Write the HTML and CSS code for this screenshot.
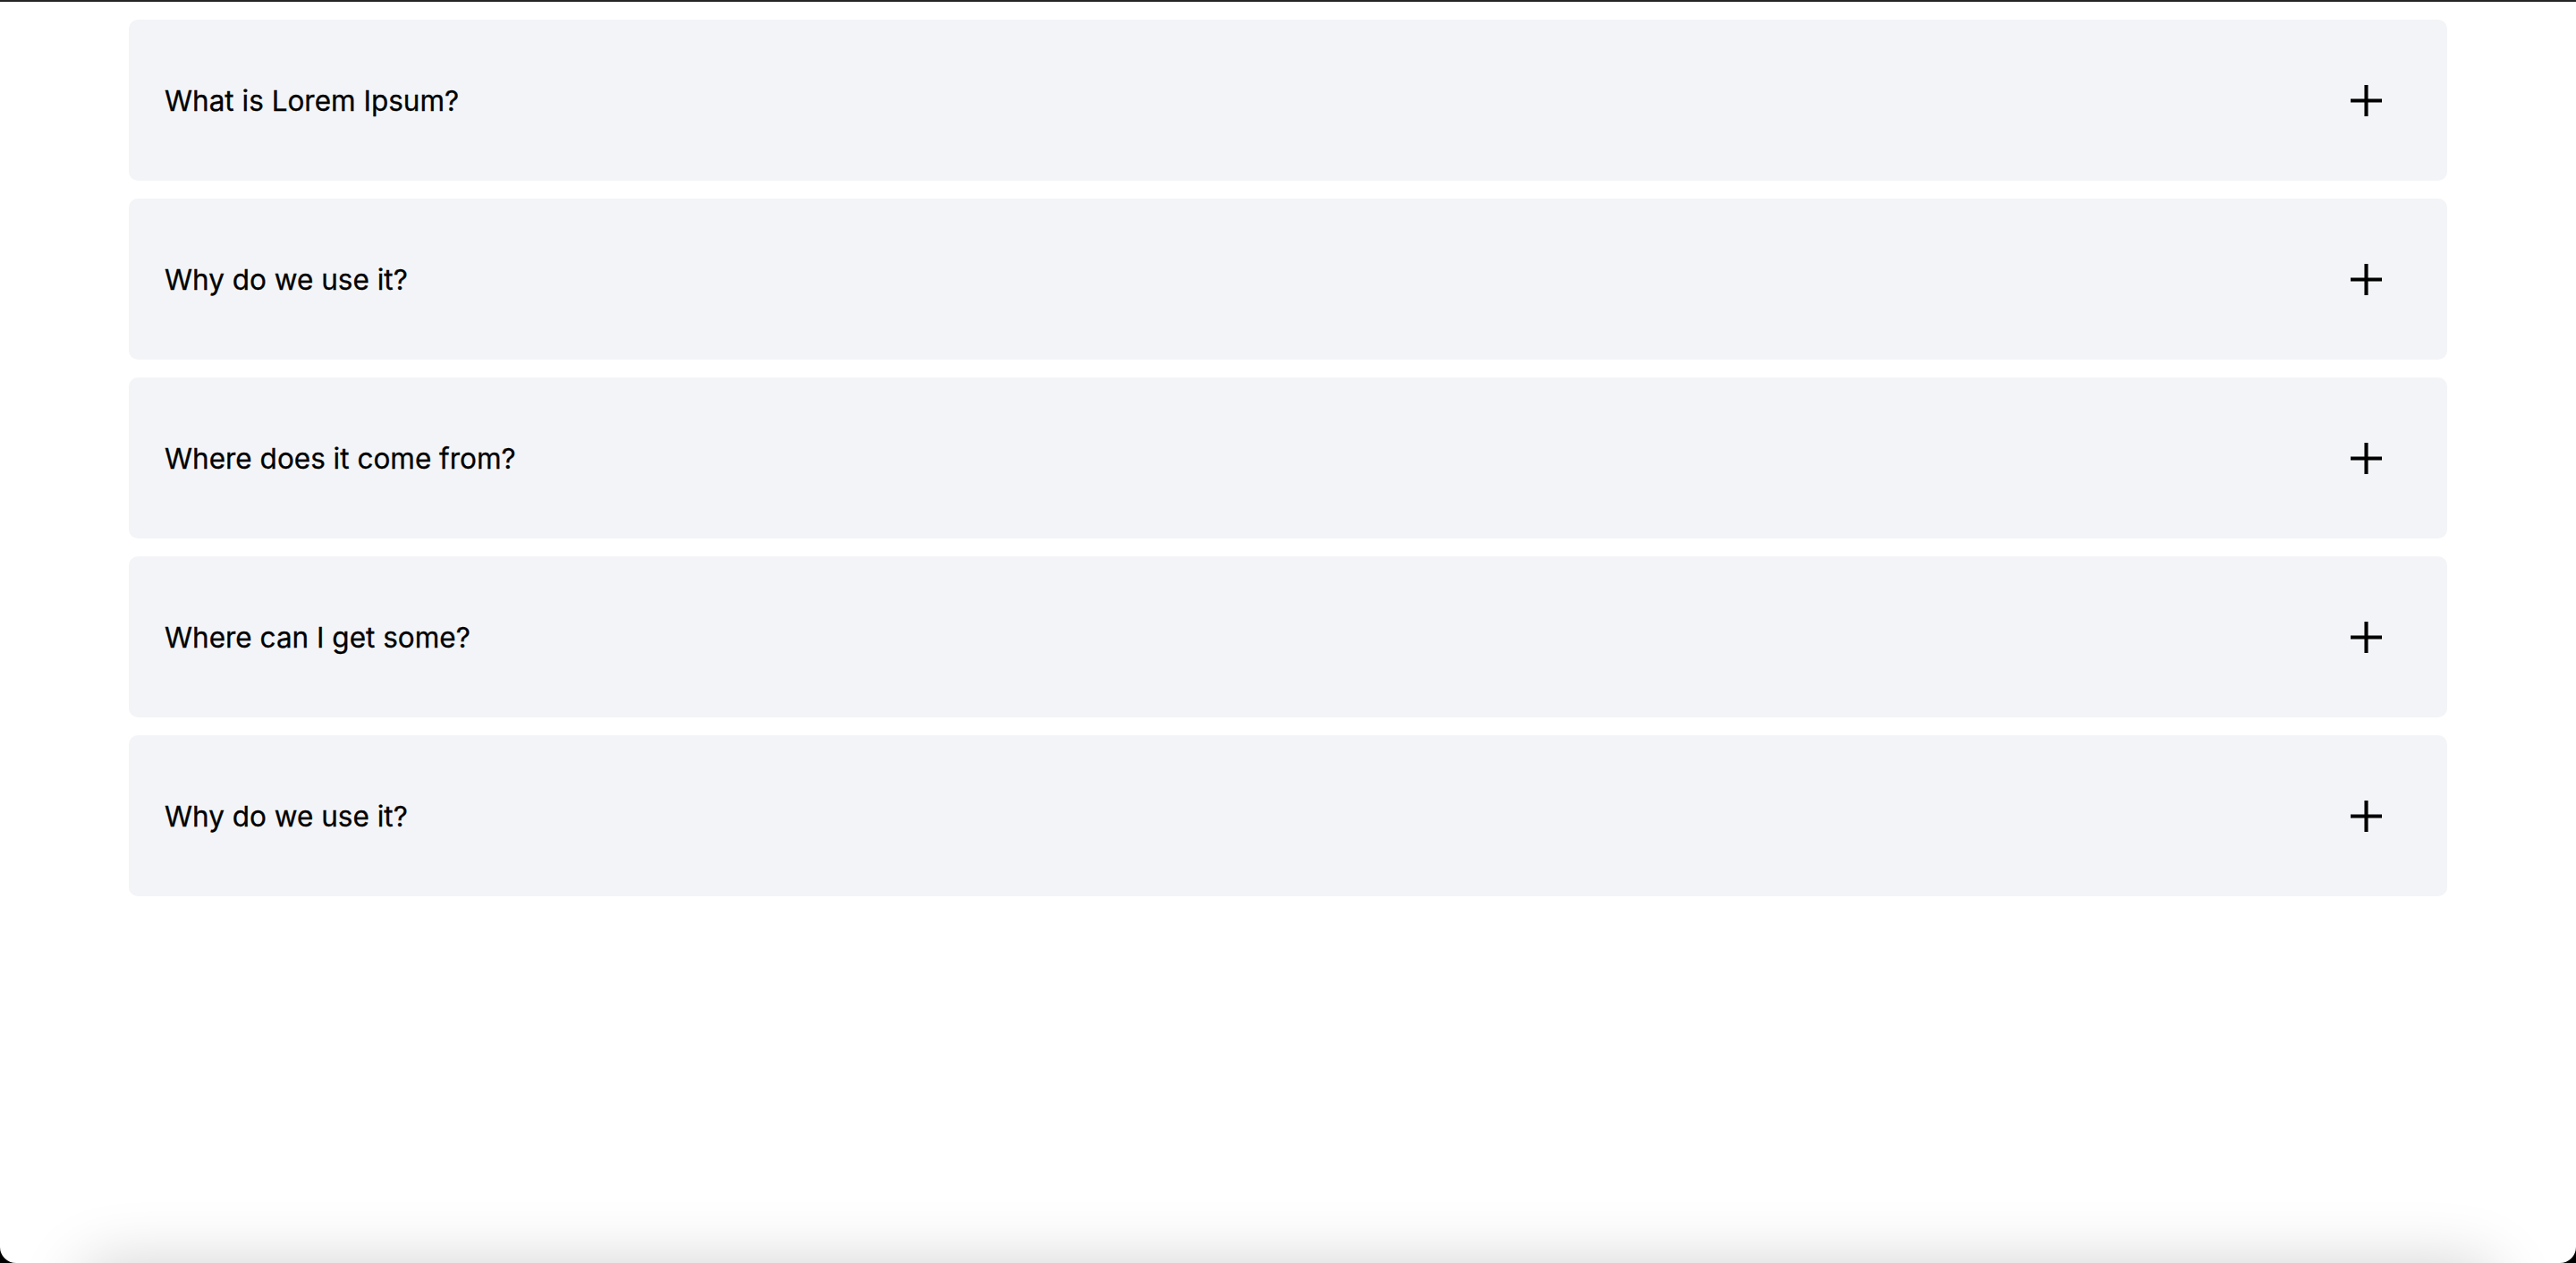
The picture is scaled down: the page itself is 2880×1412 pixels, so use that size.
FILE: index.html
```html
<!DOCTYPE html>
<html lang="en">
<head>
  <meta charset="UTF-8" />
  <meta name="viewport" content="width=device-width, initial-scale=1" />
  <title>FAQ</title>
  <link rel="stylesheet" href="styles.css">
</head>
<body>
  <div class="window">
    <div class="faq">
      <div class="faq-item">
        <span class="question">What is Lorem Ipsum?</span>
        <svg class="plus" viewBox="0 0 36 36"><path d="M18 0V36M0 18H36" /></svg>
      </div>
      <div class="faq-item">
        <span class="question">Why do we use it?</span>
        <svg class="plus" viewBox="0 0 36 36"><path d="M18 0V36M0 18H36" /></svg>
      </div>
      <div class="faq-item">
        <span class="question">Where does it come from?</span>
        <svg class="plus" viewBox="0 0 36 36"><path d="M18 0V36M0 18H36" /></svg>
      </div>
      <div class="faq-item">
        <span class="question">Where can I get some?</span>
        <svg class="plus" viewBox="0 0 36 36"><path d="M18 0V36M0 18H36" /></svg>
      </div>
      <div class="faq-item">
        <span class="question">Why do we use it?</span>
        <svg class="plus" viewBox="0 0 36 36"><path d="M18 0V36M0 18H36" /></svg>
      </div>
    </div>

    <!-- shadow of the bar sitting just under the window -->
    <div class="bottom-bar"></div>
  </div>
</body>
</html>
```

FILE: styles.css
```css
* {
  box-sizing: border-box;
}
html {
  background: #000;
}
body {
  margin: 0;
  font-family: Inter, "Noto Sans", sans-serif;
}

.window {
  height: 100vh;
  overflow: hidden;
  position: relative;
  background: white;
  border-top: 2px solid #242424;
  border-radius: 0 0 18px 18px;
}

.faq {
  width: 90%;
  margin: 20px auto 0 auto;
  display: flex;
  flex-direction: column;
  gap: 20px;
}

.faq-item {
  height: 180px;
  background: #f3f4f7;
  border-radius: 10px;
  display: flex;
  justify-content: space-between;
  align-items: center;
  padding: 0 73px 0 40px;
  cursor: pointer;
}

.question {
  font-size: 31.5px;
  font-weight: 400;
  color: #000;
  -webkit-text-stroke: 0.3px #000;
}

.plus {
  width: 35px;
  height: 35px;
  stroke: #000;
  stroke-width: 4.2;
  fill: none;
}

.bottom-bar {
  position: absolute;
  left: 90px;
  right: 90px;
  bottom: -120px;
  height: 120px;
  border-radius: 30px;
  box-shadow: 0 0 70px rgba(0, 0, 0, 0.18);
}
```
